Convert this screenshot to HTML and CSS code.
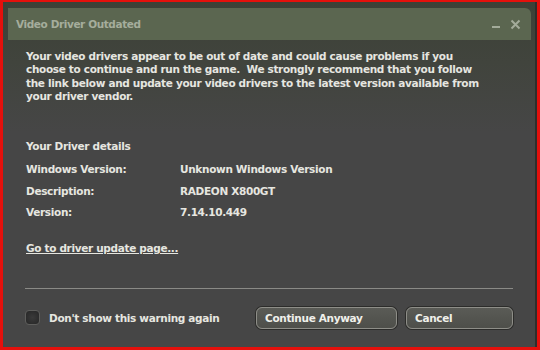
FILE: index.html
```html
<!DOCTYPE html>
<html lang="en">
<head>
    <meta charset="UTF-8">
    <title>Video Driver Outdated</title>
    <link rel="stylesheet" href="styles.css">
</head>
<body>
    <div class="dialog">
        <div class="titlebar">
            <span class="title">Video Driver Outdated</span>
            <span class="controls">
                <span class="minimize"></span>
                <svg class="close" width="11" height="11" viewBox="0 0 11 11">
                    <path d="M1.5 1.5 L9.5 9.5 M9.5 1.5 L1.5 9.5" stroke="#a3ab9a" stroke-width="2" fill="none"/>
                </svg>
            </span>
        </div>

        <div class="content">
            <p class="message">
                Your video drivers appear to be out of date and could cause problems if you<br>
                choose to continue and run the game.&nbsp; We strongly recommend that you follow<br>
                the link below and update your video drivers to the latest version available from<br>
                your driver vendor.
            </p>

            <div class="details">
                <div class="details-head">Your Driver details</div>
                <div class="row"><span class="label">Windows Version:</span><span>Unknown Windows Version</span></div>
                <div class="row"><span class="label">Description:</span><span>RADEON X800GT</span></div>
                <div class="row"><span class="label">Version:</span><span>7.14.10.449</span></div>
            </div>

            <a class="update-link" href="#">Go to driver update page...</a>
        </div>

        <div class="footer">
            <label class="dont-show"><span class="checkbox"></span>Don't show this warning again</label>
            <div class="buttons">
                <button class="btn btn-continue">Continue Anyway</button>
                <button class="btn btn-cancel">Cancel</button>
            </div>
        </div>
    </div>
</body>
</html>
```

FILE: styles.css
```css
html, body {
    margin: 0;
    height: 100%;
}
body {
    background: #e4100c;
    padding: 2px 3px 3px 3px;
    box-sizing: border-box;
    font-family: "DejaVu Sans", Verdana, sans-serif;
    font-weight: bold;
    font-size: 10.5px;
    letter-spacing: -0.33px;
    color: #e6e6e0;
}
.dialog {
    height: 100%;
    box-sizing: border-box;
    background: linear-gradient(#3c4137 0, #41443d 60px, #464646 130px);
    border-right: 2px solid #2e2f2c;
    padding: 6px 4px 0 5px;
    display: flex;
    flex-direction: column;
}
.titlebar {
    height: 32px;
    background: #5b6650;
    border-top-right-radius: 6px;
    display: flex;
    align-items: center;
    justify-content: space-between;
    padding: 0 10px 0 8px;
}
.title {
    color: #a5ad9c;
    font-size: 10.5px;
    letter-spacing: -0.4px;
}
.controls {
    display: flex;
    align-items: center;
    gap: 10px;
}
.minimize {
    width: 8px;
    height: 2px;
    background: #a3ab9a;
    margin-top: 6px;
}
.close {
    display: block;
}
.content {
    padding: 10px 0 0 18px;
}
.message {
    margin: 0;
    line-height: 13.3px;
}
.details {
    margin-top: 31px;
}
.details-head {
    line-height: 25px;
}
.row {
    display: flex;
    line-height: 21.6px;
}
.label {
    width: 154px;
}
.update-link {
    display: inline-block;
    margin-top: 17px;
    color: #e6e6e0;
    line-height: 14px;
}
.footer {
    margin: 33px 18px 0 17px;
    border-top: 1px solid #8a8a86;
    padding-top: 18px;
    display: flex;
    justify-content: space-between;
    align-items: center;
}
.dont-show {
    display: flex;
    align-items: center;
    gap: 9px;
}
.checkbox {
    width: 13px;
    height: 13px;
    border: 1px solid #5e5e5c;
    border-radius: 4px;
    background: radial-gradient(circle at 50% 50%, #3a3a3a, #262626);
}
.buttons {
    display: flex;
    gap: 9px;
}
.btn {
    font: inherit;
    letter-spacing: inherit;
    color: #f0f0ea;
    text-align: left;
    height: 22px;
    padding: 0 8px;
    border: 1px solid #8e8e88;
    border-radius: 6px;
    box-shadow: 0 0 0 1px #2c2c2a;
    background: linear-gradient(#5a5b56, #4e4f4a);
}
.btn-continue {
    width: 141px;
}
.btn-cancel {
    width: 107px;
}
```
